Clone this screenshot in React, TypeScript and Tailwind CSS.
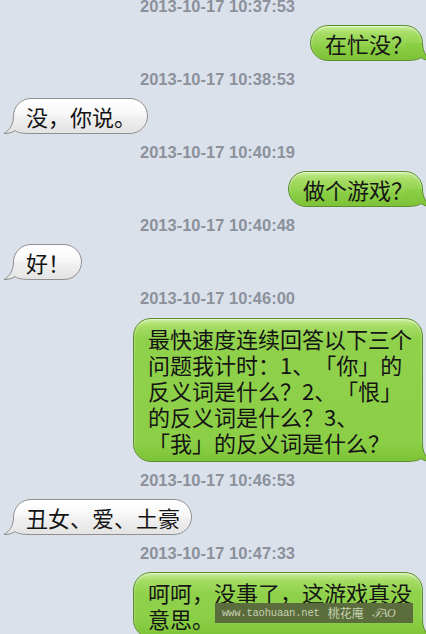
import React from "react";

type Msg = { time: string; side: "left" | "right"; text: string; multi?: boolean; watermark?: boolean };

const msgs: Msg[] = [
  { time: "2013-10-17 10:37:53", side: "right", text: "在忙没？" },
  { time: "2013-10-17 10:38:53", side: "left", text: "没，你说。" },
  { time: "2013-10-17 10:40:19", side: "right", text: "做个游戏？" },
  { time: "2013-10-17 10:40:48", side: "left", text: "好！" },
  {
    time: "2013-10-17 10:46:00",
    side: "right",
    text: "最快速度连续回答以下三个问题我计时：1、「你」的反义词是什么？2、「恨」的反义词是什么？3、「我」的反义词是什么？",
    multi: true,
  },
  { time: "2013-10-17 10:46:53", side: "left", text: "丑女、爱、土豪" },
  { time: "2013-10-17 10:47:33", side: "right", text: "呵呵，没事了，这游戏真没意思。", multi: true, watermark: true },
];

function Tail({ green }: { green: boolean }) {
  const id = green ? "tg" : "tw";
  const top = green ? "#8bcf46" : "#f1f1f1";
  const bottom = green ? "#7cc236" : "#e3e3e3";
  const stroke = green ? "#5a8e2c" : "#8f8f8f";
  const d = "M10.5 6 C10.5 14 7 20 1 23.5 C5 23.8 9 22.6 12 20.6 C15 22.8 20 23.5 28 23.5";
  return (
    <svg
      width="30"
      height="24"
      viewBox="0 0 30 24"
      className={
        green
          ? "absolute right-[-11px] bottom-[-1px] -scale-x-100"
          : "absolute left-[-11px] bottom-[-1px]"
      }
    >
      <defs>
        <linearGradient id={id} x1="0" y1="6" x2="0" y2="24" gradientUnits="userSpaceOnUse">
          <stop offset="0" stopColor={top} />
          <stop offset="1" stopColor={bottom} />
        </linearGradient>
      </defs>
      <path d={d + " L28 6 Z"} fill={`url(#${id})`} />
      <path d={d} fill="none" stroke={stroke} strokeWidth="1" />
    </svg>
  );
}

function Bubble({ m }: { m: Msg }) {
  const green = m.side === "right";
  return (
    <div className={green ? "flex justify-end pr-[3px]" : "flex justify-start pl-[13px]"}>
      <div
        className={
          (green
            ? "border-[#5a8e2c] pl-[14px] pr-[9px] max-w-[290px] bg-[linear-gradient(to_bottom,#c6ec93_0px,#a4dc62_8px,#90d14c_20px,#8bcf46_calc(100%_-_18px),#7cc236_100%)] shadow-[inset_0_1px_2px_rgba(255,255,255,0.7)]"
            : "border-[#8f8f8f] pl-[12px] pr-[11px] bg-[linear-gradient(to_bottom,#ffffff_0px,#fbfbfb_10px,#f4f4f4_18px,#f1f1f1_calc(100%_-_18px),#e3e3e3_100%)] shadow-[inset_0_1px_2px_rgba(255,255,255,0.9)]") +
          " relative border rounded-[18px] text-[22px] text-[#141414] font-['Noto_Sans_CJK_SC',sans-serif] [text-spacing-trim:space-all] " +
          (m.multi ? "py-[6px] leading-[26px]" : "py-[4px] leading-[26px]")
        }
      >
        <Tail green={green} />
        <span className="relative">{m.text}</span>
        {m.watermark && (
          <div className="absolute left-[81px] top-[30px] w-[198px] h-[20px] bg-[#5b6d3c] flex items-center gap-[8px] pl-[7px] text-[#c5d0b2]">
            <span className="font-['Liberation_Mono',monospace] text-[10.5px] leading-[20px] tracking-[-0.2px]">www.taohuaan.net</span>
            <span className="font-['Noto_Sans_CJK_SC',sans-serif] text-[12px] leading-[20px]">桃花庵</span>
            <span className="font-['Liberation_Serif',serif] italic text-[12px] leading-[20px] tracking-[-0.5px]">𝒯AO</span>
          </div>
        )}
      </div>
    </div>
  );
}

export default function App() {
  return (
    <div className="w-[426px] h-[634px] overflow-hidden bg-[#dbe1eb] flex flex-col">
      {msgs.map((m, i) => (
        <div key={i} className="flex flex-col">
          <div
            className={
              (i === 0 ? "mt-[-4px] " : i === 5 ? "mt-[8px] " : "mt-[8px] ") +
              "h-[20px] leading-[20px] text-center pl-[9px] text-[16.5px] font-bold text-[#8c919b] font-['Liberation_Sans',Arial,sans-serif] " +
              (i === 4 ? "mb-[10px]" : "mb-[9px]")
            }
          >
            {m.time}
          </div>
          <Bubble m={m} />
        </div>
      ))}
    </div>
  );
}
